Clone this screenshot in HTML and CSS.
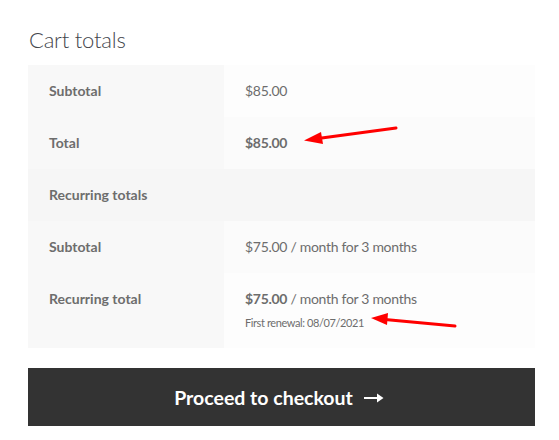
FILE: index.html
```html
<!DOCTYPE html>
<html>
<head>
<meta charset="utf-8">
<link rel="stylesheet" href="styles.css">
</head>
<body>
<div class="cart">
  <h2 class="title">Cart totals</h2>
  <table class="totals">
    <tr class="row">
      <th>Subtotal</th>
      <td>$85.00</td>
    </tr>
    <tr class="row alt">
      <th>Total</th>
      <td><strong>$85.00</strong></td>
    </tr>
    <tr class="row heading">
      <th colspan="2">Recurring totals</th>
    </tr>
    <tr class="row alt">
      <th>Subtotal</th>
      <td>$75.00 / month for 3 months</td>
    </tr>
    <tr class="row">
      <th>Recurring total</th>
      <td><strong>$75.00</strong> / month for 3 months<div class="renewal">First renewal: 08/07/2021</div></td>
    </tr>
  </table>
  <a class="checkout">Proceed to checkout
    <svg class="arrow-icon" width="20" height="10" viewBox="0 0 20 10"><path d="M0 4h13V0.5L19.5 5 13 9.5V6H0z" fill="#fff"/></svg>
  </a>
</div>
<svg class="annot" width="559" height="440" viewBox="0 0 559 440">
  <line x1="396" y1="128" x2="318" y2="138.5" stroke="#f00" stroke-width="3" stroke-linecap="round"/>
  <polygon points="304,140.5 321,132 323,144" fill="#f00"/>
  <line x1="455" y1="326" x2="385" y2="319.5" stroke="#f00" stroke-width="3" stroke-linecap="round"/>
  <polygon points="371,318 388,313 387,325" fill="#f00"/>
</svg>
</body>
</html>
```
FILE: styles.css
```css
html, body {
  margin: 0;
  padding: 0;
  background: #fff;
}
body {
  font-family: "Lato", "Liberation Sans", sans-serif;
  color: #6d6d6d;
  position: relative;
  width: 559px;
  height: 440px;
  overflow: hidden;
}
.cart {
  padding: 25px 24px 0 28px;
}
.title {
  margin: 0 0 10px 1px;
  font-size: 22px;
  font-weight: 300;
  color: #43454b;
  line-height: 30px;
  letter-spacing: -0.2px;
}
.totals {
  width: 100%;
  border-collapse: collapse;
  border-spacing: 0;
  font-size: 14px;
}
.totals th, .totals td {
  padding: 16px 21px;
  line-height: 20px;
  text-align: left;
  vertical-align: top;
}
.totals th {
  width: 154px;
  font-weight: 700;
  background: #f8f8f8;
}
.totals td {
  background: #fdfdfd;
  letter-spacing: -0.3px;
}
.totals .alt td {
  background: #fbfbfb;
}
.totals .heading th {
  background: #f6f6f6;
}
.totals strong {
  font-weight: 700;
}
.renewal {
  font-size: 11px;
  line-height: 18px;
  margin-top: 5px;
  letter-spacing: -0.4px;
}
.checkout {
  margin-top: 20px;
  height: 58px;
  background: #333333;
  color: #fff;
  display: flex;
  align-items: center;
  justify-content: center;
  gap: 11px;
  font-size: 19.5px;
  font-weight: 700;
  padding-right: 5px;
}
.arrow-icon {
  display: block;
  margin-top: 1px;
}
.annot {
  position: absolute;
  left: 0;
  top: 0;
  pointer-events: none;
}
```
